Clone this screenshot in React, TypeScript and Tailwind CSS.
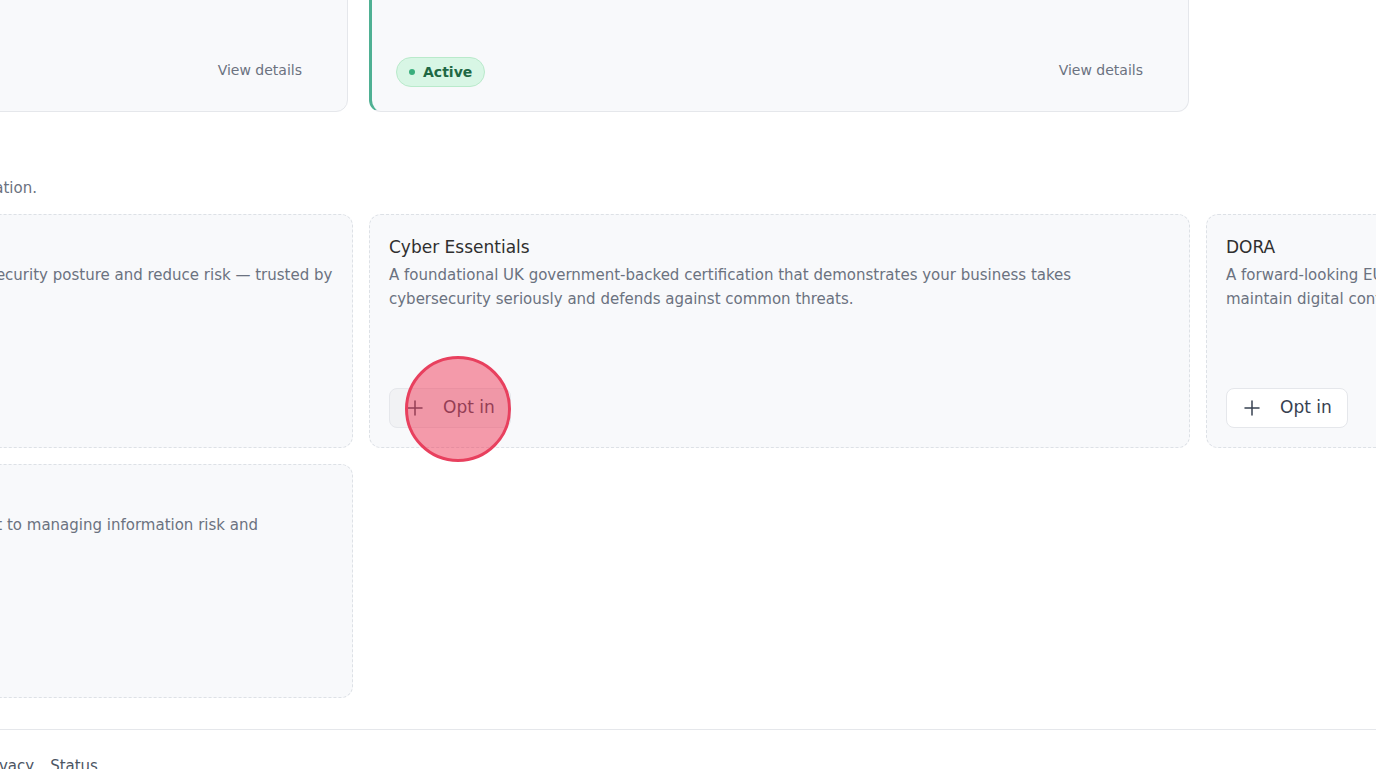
import React from "react";
import { Plus } from "lucide-react";

interface Framework {
  name: string;
  description: string;
  hovered?: boolean;
}

const frameworks: Framework[] = [
  {
    name: "SOC 2",
    description:
      "A globally recognised framework that helps improve your security posture and reduce risk — trusted by organisations worldwide.",
  },
  {
    name: "Cyber Essentials",
    description:
      "A foundational UK government-backed certification that demonstrates your business takes cybersecurity seriously and defends against common threats.",
    hovered: true,
  },
  {
    name: "DORA",
    description:
      "A forward-looking EU regulation that strengthens operational resilience so financial entities can maintain digital continuity.",
  },
  {
    name: "ISO 27001",
    description:
      "A recognised international standard showing a commitment to managing information risk and protecting sensitive data.",
  },
];

const ActiveCard = ({ name, description, active }: { name: string; description: string; active?: boolean }) => (
  <div
    className={`flex h-[190px] flex-col justify-between rounded-xl border border-[#e5e7eb] bg-[#f8f9fb] p-6 ${
      active ? "border-l-[3px] border-l-[#4fb093]" : ""
    }`}
  >
    <div>
      <h3 className="text-[17px] leading-7 text-[#2f2f2f]">{name}</h3>
      <p className="text-[15px] leading-6 text-[#6b7280]">{description}</p>
    </div>
    <div className="flex items-center justify-between">
      <span className="inline-flex h-[30px] items-center gap-2 rounded-full border border-[#b9eacb] bg-[#d8f6e5] px-3 text-[14px] font-semibold text-[#1f6844]">
        <span className="h-1.5 w-1.5 rounded-full bg-[#3aae7d]"></span>
        Active
      </span>
      <button className="mb-1 rounded-md px-[21px] text-[14px] leading-6 text-[#6b7280]">View details</button>
    </div>
  </div>
);

const FrameworkCard = ({ fw }: { fw: Framework }) => (
  <div className="flex h-[234px] flex-col rounded-xl border border-dashed border-[#dde1e6] bg-[#f8f9fb] px-[19px] pb-[19px] pt-5">
    <h3 className="text-[17px] leading-6 text-[#2f2f2f]">{fw.name}</h3>
    <p className="mt-[4px] text-[15px] leading-6 text-[#6b7280]">{fw.description}</p>
    <button
      className={`mt-auto inline-flex h-[40px] items-center gap-4 self-start rounded-lg border border-[#e5e7eb] pl-[13px] pr-[15px] text-[17px] text-[#374151] ${
        fw.hovered ? "bg-[#f1f2f4]" : "bg-white"
      }`}
    >
      <Plus size={24} strokeWidth={1.5} />
      Opt in
    </button>
  </div>
);

export default function App() {
  return (
    <div className="relative h-screen overflow-hidden bg-white font-['DejaVu_Sans',sans-serif]">
      <div className="ml-[-472px] mt-[-78px] w-[2500px]">
        {/* Enabled frameworks */}
        <div className="grid grid-cols-[820px_820px] gap-[21px]">
          <ActiveCard name="GDPR" description="Protect personal data and meet EU privacy obligations." active={false} />
          <ActiveCard name="ISO 9001" description="Quality management for consistent delivery." active />
        </div>

        {/* Available frameworks */}
        <section className="ml-[4px] mt-9">
          <h2 className="text-[18px] font-semibold leading-7 text-[#2f2f2f]">Available frameworks</h2>
          <p className="text-[15px] leading-6 text-[#6b7280]">
            Opt in to more frameworks to grow coverage for your organisation.
          </p>
          <div className="mt-[14px] grid grid-cols-[821px_821px_821px] gap-4">
            {frameworks.map((fw) => (
              <FrameworkCard key={fw.name} fw={fw} />
            ))}
          </div>
        </section>

        <footer className="mt-[31px] border-t border-[#e5e7eb] pl-[4px] pt-6">
          <div className="flex items-center gap-[52px] text-[15px] leading-6 text-[#4b5563]">
            <span>© 2025 Complyance Ltd. All rights reserved.</span>
            <nav className="flex gap-4">
              <a>Terms</a>
              <a>Privacy</a>
              <a>Status</a>
            </nav>
          </div>
        </footer>
      </div>

      {/* click indicator */}
      <div className="pointer-events-none absolute left-[405px] top-[356px] h-[106px] w-[106px] rounded-full border-[3px] border-[#e8405e] bg-[#f03c5a]/50"></div>
    </div>
  );
}
